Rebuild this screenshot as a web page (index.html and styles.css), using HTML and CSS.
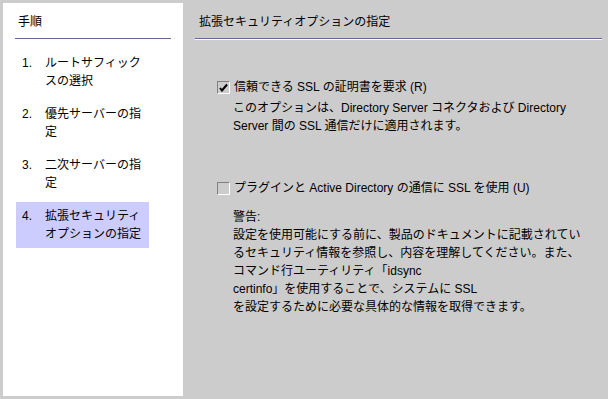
FILE: index.html
```html
<!DOCTYPE html>
<html lang="ja">
<head>
    <meta charset="UTF-8">
    <title>拡張セキュリティオプションの指定</title>
    <link rel="stylesheet" href="styles.css">
</head>
<body>
    <div class="steps">
        <div class="steps-title">手順</div>
        <ol class="step-list">
            <li class="step"><span class="step-num">1.</span><span class="step-text">ルートサフィックスの選択</span></li>
            <li class="step"><span class="step-num">2.</span><span class="step-text">優先サーバーの指定</span></li>
            <li class="step"><span class="step-num">3.</span><span class="step-text">二次サーバーの指定</span></li>
            <li class="step current"><span class="step-num">4.</span><span class="step-text">拡張セキュリティオプションの指定</span></li>
        </ol>
    </div>

    <div class="main">
        <div class="main-title">拡張セキュリティオプションの指定</div>

        <div class="option first">
            <label class="check-row">
                <span class="checkbox">
                    <svg width="9" height="9" viewBox="0 0 9 9"><path d="M1 5 L3 7.5 L8 1.5" fill="none" stroke="#000" stroke-width="2"/></svg>
                </span>
                信頼できる SSL の証明書を要求 (R)
            </label>
            <p class="option-help">このオプションは、Directory Server コネクタおよび Directory<br>Server 間の SSL 通信だけに適用されます。</p>
        </div>

        <div class="option second">
            <label class="check-row">
                <span class="checkbox"></span>
                プラグインと Active Directory の通信に SSL を使用 (U)
            </label>
            <p class="option-help warning">警告:<br>設定を使用可能にする前に、製品のドキュメントに記載されてい<br>るセキュリティ情報を参照し、内容を理解してください。また、<br>コマンド行ユーティリティ「idsync<br>certinfo」を使用することで、システムに SSL<br>を設定するために必要な具体的な情報を取得できます。</p>
        </div>
    </div>
</body>
</html>
```

FILE: styles.css
```css
html, body {
    height: 100%;
}

body {
    margin: 0;
    padding: 3px;
    box-sizing: border-box;
    display: flex;
    background-color: #cccccc;
    color: #000;
    font-family: "Liberation Sans", "Noto Sans CJK JP", sans-serif;
    font-size: 12px;
    line-height: 18px;
}

.steps {
    width: 180px;
    flex: none;
    background-color: #fff;
    padding: 10px 12px 0;
    box-sizing: border-box;
}

.steps-title {
    padding: 0 3px 7px;
    border-bottom: 1px solid #666699;
}

.step-list {
    list-style: none;
    margin: 10px 0 0;
    padding: 0;
}

.step {
    display: flex;
    width: 133px;
    box-sizing: border-box;
    margin: 0 0 5px 1px;
    padding: 5px 4px 5px 6px;
}

.step.current {
    background-color: #ccccff;
}

.step-num {
    width: 23px;
    flex: none;
}

.step-text {
    width: 100px;
}

.main {
    flex: 1;
    padding: 10px 3px 0 12px;
}

.main-title {
    padding: 0 0 7px 4px;
    border-bottom: 1px solid #666699;
    box-shadow: 0 1px 0 #fff;
}

.option {
    padding-left: 22px;
}

.option.first {
    margin-top: 39px;
}

.option.second {
    margin-top: 44px;
}

.check-row {
    display: flex;
    align-items: center;
    gap: 4px;
}

.checkbox {
    width: 13px;
    height: 13px;
    box-sizing: border-box;
    flex: none;
    display: flex;
    align-items: center;
    justify-content: center;
    border-top: 1px solid #808080;
    border-left: 1px solid #808080;
    border-right: 1px solid #fff;
    border-bottom: 1px solid #fff;
    background-color: #cccccc;
}

.option-help {
    margin: 3px 0 0 16px;
}

.option-help.warning {
    margin-top: 11px;
}
```
